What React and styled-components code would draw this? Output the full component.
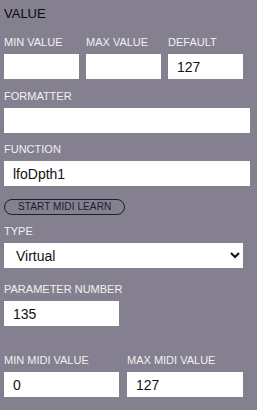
import React from 'react';
import styled, { createGlobalStyle } from 'styled-components';

const GlobalStyle = createGlobalStyle`
  html, body {
    margin: 0;
    padding: 0;
    background: #84808f;
  }
  body {
    font-family: "Liberation Sans", Arial, sans-serif;
  }
`;

const Panel = styled.div`
  width: 257px;
  height: 410px;
  box-sizing: border-box;
  padding: 6px 4px 0 4px;
  background: #84808f;
`;

const Title = styled.h2`
  margin: 0 0 15px 0;
  font-size: 13px;
  line-height: 15px;
  font-weight: normal;
  color: #0a0a0a;
`;

const Row = styled.div`
  display: flex;
  gap: ${props => props.gap || 7}px;
  margin-bottom: ${props => props.mb || 0}px;
`;

const Field = styled.div`
  display: flex;
  flex-direction: column;
  margin-bottom: ${props => props.mb || 0}px;
`;

const Label = styled.label`
  font-size: 11px;
  line-height: 13px;
  color: #f2f0f2;
  text-transform: uppercase;
  margin-bottom: 5px;
  white-space: nowrap;
`;

const Input = styled.input`
  box-sizing: border-box;
  width: ${props => props.w}px;
  height: 25px;
  border: none;
  outline: none;
  margin: 0;
  padding: 0 9px;
  background: #fff;
  color: #111;
  font-family: "Liberation Sans", Arial, sans-serif;
  font-size: 14px;
`;

const Select = styled.select`
  box-sizing: border-box;
  width: 239px;
  height: 25px;
  border: none;
  border-radius: 0;
  outline: none;
  margin: 0;
  padding: 0 8px;
  background: #fff;
  color: #111;
  font-family: "Liberation Sans", Arial, sans-serif;
  font-size: 14px;
`;

const PillButton = styled.button`
  align-self: flex-start;
  box-sizing: border-box;
  height: 16px;
  margin: 0 0 10px 0;
  padding: 0 13px;
  border: 1px solid #1e1e28;
  border-radius: 9px;
  background: transparent;
  color: #1c1c30;
  font-family: "Liberation Sans", Arial, sans-serif;
  font-size: 10px;
  line-height: 14px;
  letter-spacing: 0.1px;
  text-transform: uppercase;
  cursor: pointer;
`;

export default function App() {
  return (
    <Panel>
      <GlobalStyle />
      <Title>VALUE</Title>

      <Row mb={11}>
        <Field>
          <Label>Min value</Label>
          <Input w={75} defaultValue="" />
        </Field>
        <Field>
          <Label>Max value</Label>
          <Input w={75} defaultValue="" />
        </Field>
        <Field>
          <Label>Default</Label>
          <Input w={75} defaultValue="127" />
        </Field>
      </Row>

      <Field mb={10}>
        <Label>Formatter</Label>
        <Input w={246} defaultValue="" />
      </Field>

      <Field mb={10}>
        <Label>Function</Label>
        <Input w={246} defaultValue="lfoDpth1" />
      </Field>

      <PillButton>Start MIDI learn</PillButton>

      <Field mb={15}>
        <Label>Type</Label>
        <Select defaultValue="Virtual">
          <option>Virtual</option>
          <option>CC</option>
          <option>NRPN</option>
        </Select>
      </Field>

      <Field mb={28}>
        <Label>Parameter number</Label>
        <Input w={115} defaultValue="135" />
      </Field>

      <Row gap={8}>
        <Field>
          <Label>Min MIDI value</Label>
          <Input w={115} defaultValue="0" />
        </Field>
        <Field>
          <Label>Max MIDI value</Label>
          <Input w={116} defaultValue="127" />
        </Field>
      </Row>
    </Panel>
  );
}
